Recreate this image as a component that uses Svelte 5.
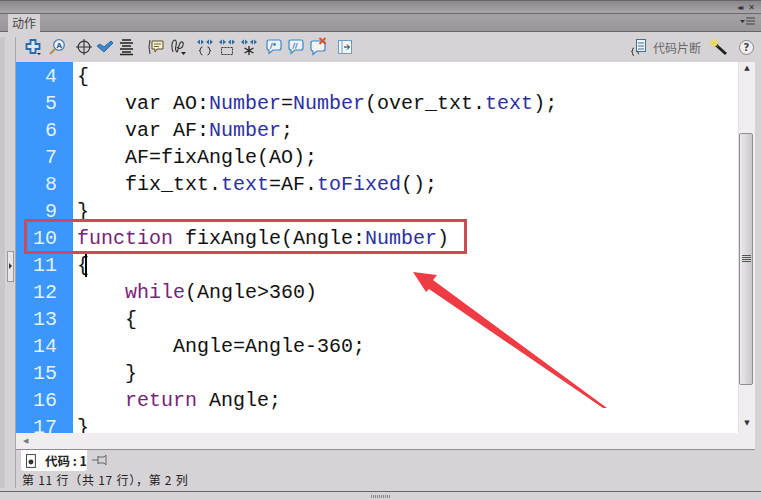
<script>
  const lines = [
    [4, [['p', '{']]],
    [5, [['p', '    var AO:'], ['t', 'Number'], ['p', '='], ['t', 'Number'], ['p', '(over_txt.'], ['t', 'text'], ['p', ');']]],
    [6, [['p', '    var AF:'], ['t', 'Number'], ['p', ';']]],
    [7, [['p', '    AF=fixAngle(AO);']]],
    [8, [['p', '    fix_txt.'], ['t', 'text'], ['p', '=AF.'], ['t', 'toFixed'], ['p', '();']]],
    [9, [['p', '}']]],
    [10, [['k', 'function'], ['p', ' fixAngle(Angle:'], ['t', 'Number'], ['p', ')']]],
    [11, [['p', '{']]],
    [12, [['p', '    '], ['k', 'while'], ['p', '(Angle>360)']]],
    [13, [['p', '    {']]],
    [14, [['p', '        Angle=Angle-360;']]],
    [15, [['p', '    }']]],
    [16, [['p', '    '], ['k', 'return'], ['p', ' Angle;']]],
    [17, [['p', '}']]]
  ];
</script>

{#snippet blueArrows()}
  <path d="M0 4l3-2.500v5zM7 4L4 1.500v5zM9 4l3-2.500v5zM16 4l-3-2.500v5z" fill="#2a6aa5"/>
{/snippet}

<div class="panel">
  <div class="titlebar">
    <span class="collapse">◂◂</span>
    <span class="close">✕</span>
  </div>
  <div class="tabbar">
    <div class="tab">动作</div>
    <svg class="menu" width="16" height="10" viewBox="0 0 16 10"><path d="M0 3h5l-2.500 3z" fill="#333"/><path d="M6 1h9M6 4h9M6 7h9" stroke="#444" fill="none"/></svg>
  </div>

  <div class="body">
    <div class="rail">
      <div class="grip"><span></span></div>
    </div>
    <div class="main">
      <div class="toolbar">
        <svg class="ic g-plus" width="16" height="18" viewBox="0 0 16 18"><path d="M5.500 2h5v4h4v5h-4v4h-5v-4h-4V6h4z" fill="#d8e8f6" stroke="#2a6aa5" stroke-width="1.800"/><path d="M12 15h4l-2 2z" fill="#222"/></svg>
        <svg class="ic g-mag" width="16" height="18" viewBox="0 0 16 18"><circle cx="10" cy="7" r="5.300" fill="#f2f2f4" stroke="#4a7fb0" stroke-width="1.300"/><path d="M6 11l-5 5" stroke="#b9924a" stroke-width="2.300"/><text x="7.500" y="10" class="mini">A</text></svg>
        <div class="group tight">
          <svg class="ic" width="16" height="18" viewBox="0 0 16 18"><circle cx="8" cy="9" r="5.800" fill="none" stroke="#333" stroke-width="1.200"/><path d="M8 1v16M0 9h16" stroke="#333" stroke-width="1.100"/></svg>
          <svg class="ic" width="16" height="18" viewBox="0 0 16 18"><path d="M0 8l3-2 4 3 7-6 2 2-9 9z" fill="#3d87c9" stroke="#2a6aa5"/></svg>
          <svg class="ic" width="16" height="18" viewBox="0 0 16 18"><path d="M4 2h9M2 5h13M4 8h9M2 11h13M4 14h9M2 16.500h13" stroke="#222" stroke-width="1.300"/></svg>
        </div>
        <div class="group g-com">
          <svg class="ic" width="16" height="18" viewBox="0 0 16 18"><path d="M2 2q-2 7 0 14" stroke="#333" fill="none"/><path d="M4 3h11v8H9l-2 3v-3H4z" fill="#f4efcf" stroke="#5a4a2a"/><path d="M6 6h7M6 8.500h5" stroke="#7a6a3a"/></svg>
          <svg class="ic" width="16" height="18" viewBox="0 0 16 18"><path d="M3 14C0 5 4 0 6 3c2 3-3 8 1 11 2-2 1-8 4-10 3-1 3 4 0 6-2 1-3 1-4-1" stroke="#333" fill="none" stroke-width="1.100"/><path d="M11 14h5l-2.500 3z" fill="#222"/></svg>
        </div>
        <div class="group g-braces">
          <svg class="ic" width="16" height="18" viewBox="0 0 16 18">{@render blueArrows()}<path d="M5.500 9q-2 0-2 2t-1.500 1.500q1.500 0 1.500 2t2 2.500M10.500 9q2 0 2 2t1.500 1.500q-1.500 0-1.500 2t-2 2.500" stroke="#333" fill="none"/></svg>
          <svg class="ic" width="16" height="18" viewBox="0 0 16 18">{@render blueArrows()}<rect x="2.500" y="9.500" width="11" height="7" fill="none" stroke="#333" stroke-dasharray="2 1"/></svg>
          <svg class="ic" width="16" height="18" viewBox="0 0 16 18">{@render blueArrows()}<path d="M8 8v9M3.500 10l9 5M12.500 10l-9 5" stroke="#222" stroke-width="1.300"/></svg>
        </div>
        <div class="group g-bubbles">
          <svg class="ic" width="16" height="18" viewBox="0 0 16 18"><path d="M3 2h10q2 0 2 2v6q0 2-2 2H7l-4 3.500V12q-2 0-2-2V4q0-2 2-2z" fill="#eaf2fa" stroke="#3d87c9" stroke-width="1.200"/><text x="4" y="9.500" class="mini">/*</text></svg>
          <svg class="ic" width="16" height="18" viewBox="0 0 16 18"><path d="M3 2h10q2 0 2 2v6q0 2-2 2H7l-4 3.500V12q-2 0-2-2V4q0-2 2-2z" fill="#eaf2fa" stroke="#3d87c9" stroke-width="1.200"/><text x="4.500" y="9.500" class="mini">//</text></svg>
          <svg class="ic" width="16" height="18" viewBox="0 0 16 18"><path d="M3 3h10q2 0 2 2v6q0 2-2 2H7l-4 3.500V13q-2 0-2-2V5q0-2 2-2z" fill="#f4f4f2" stroke="#3d87c9" stroke-width="1.200"/><path d="M9.500 0l6 6M15.500 0l-6 6" stroke="#d9542b" stroke-width="2"/></svg>
        </div>
        <svg class="ic g-last" width="16" height="18" viewBox="0 0 16 18"><rect x="1.500" y="2.500" width="13" height="13" fill="#f4f6f8" stroke="#6b9cc6"/><path d="M5 2v14" stroke="#6b9cc6"/><path d="M7 9h5M10 6.500l2.500 2.500-2.500 2.500" stroke="#222" fill="none"/></svg>

        <div class="right">
          <svg width="16" height="18" viewBox="0 0 16 18"><rect x="5.500" y="1.500" width="9" height="12" fill="#f2f4f7" stroke="#3e6e99"/><path d="M7 5h6M7 8h6M7 11h6" stroke="#3e6e99"/><path d="M3 10q-1.500 0-1.500 2t-1 1.500q1 0 1 2t1.500 2M6 13q1 0 1 1.500t1 1.500" stroke="#333" fill="none"/></svg>
          <span class="snip">代码片断</span>
          <svg class="wand" width="20" height="18" viewBox="0 0 20 18"><path d="M7 7l10 9" stroke="#222" stroke-width="3"/><circle cx="5" cy="5" r="3" fill="#f5e56b"/><path d="M5 0v10M0 5h10M1.500 1.500l7 7M8.500 1.500l-7 7" stroke="#e8d24a" stroke-width=".8"/></svg>
          <span class="help">?</span>
        </div>
      </div>

      <div class="editor">
        <div class="code">
          {#each lines as [n, parts]}
            <div class="row">
              <span class="num">{n}</span>
              <span class="src">{#each parts as [c, t]}<span class={c}>{t}</span>{/each}{#if n === 11}<i class="caret"></i>{/if}</span>
            </div>
          {/each}
          <div class="highlight"></div>
          <svg class="arrow" width="200" height="142" viewBox="410 268 200 142">
            <path d="M413 272L437 275 433 280 607 408 603 408 429 289 426 292z" fill="#ef3b44"/>
          </svg>
        </div>
        <div class="vscroll">
          <div class="arrowbtn">▲</div>
          <div class="track"><div class="thumb"><svg width="9" height="8" viewBox="0 0 9 8"><path d="M0 .5h9M0 2.500h9M0 4.500h9M0 6.500h9" stroke="#555"/></svg></div></div>
          <div class="arrowbtn down">▼</div>
        </div>
      </div>

      <div class="hscroll"><span>◀</span></div>
      <div class="tabsrow">
        <div class="filetab">
          <svg width="10" height="14" viewBox="0 0 10 14"><rect x=".5" y=".5" width="9" height="13" fill="#fff" stroke="#444"/><circle cx="5" cy="8" r="2.500" fill="#333"/></svg>
          <b>代码 : 1</b>
        </div>
        <svg class="pin" width="16" height="12" viewBox="0 0 16 12"><path d="M0 6h6M6 2v8M6 3h6l2-2v10l-2-2H6" stroke="#666" fill="none"/></svg>
      </div>
      <div class="status">第 11 行（共 17 行），第 2 列</div>
    </div>
  </div>
  <div class="footer"><span class="dots"></span></div>
</div>

<style>
  :global(body) { margin: 0; background: #d6d3d6; }
  .panel {
    width: 761px; height: 500px; overflow: hidden; display: flex; flex-direction: column;
    background: #d6d3d6; font-family: "Noto Sans CJK SC", sans-serif; color: #222;
  }
  .titlebar {
    height: 12px; flex: none; display: flex; justify-content: flex-end; align-items: center; gap: 7px; padding-right: 6px;
    background: linear-gradient(#8a878a, #aaa7aa); border-bottom: 1px solid #6a686a; font-size: 8px; color: #333;
    font-family: "DejaVu Sans", sans-serif; box-sizing: content-box; border-top: 1px solid #666;
  }
  .collapse { letter-spacing: -2px; }
  .tabbar {
    height: 17px; flex: none; display: flex; justify-content: space-between; align-items: flex-end;
    background: linear-gradient(#a5a2a5, #9a979a); border-bottom: 1px solid #666; padding-left: 8px; padding-right: 5px;
  }
  .tab {
    width: 32px; height: 18px; background: #d6d3d6; text-align: center; font-size: 12px; line-height: 18px; color: #444; margin-bottom: -1px;
  }
  .menu { margin-bottom: 4px; }
  .body { flex: 1; min-height: 0; display: flex; }
  .rail {
    width: 16px; flex: none; box-sizing: border-box; border-left: 5px solid #c9c6c9; border-right: 1px solid #a8a6a8; position: relative;
    display: flex; align-items: center; margin-top: 5px; margin-bottom: 3px;
  }
  .grip {
    width: 7px; height: 31px; margin-left: 2px; margin-top: 7px; background: #e8e6e8; border: 1px solid #999; box-sizing: border-box;
    display: flex; align-items: center; justify-content: center;
  }
  .grip span { width: 0; height: 0; border-left: 3px solid #333; border-top: 3px solid transparent; border-bottom: 3px solid transparent; }
  .main { flex: 1; min-width: 0; display: flex; flex-direction: column; margin-right: 6px; }
  .toolbar { height: 30px; flex: none; display: flex; align-items: center; padding-left: 9px; box-sizing: border-box; }
  .ic { flex: none; overflow: visible; }
  .group { display: flex; gap: 6px; flex: none; }
  .group.tight { gap: 5px; margin-left: 11px; }
  .g-mag { margin-left: 8px; }
  .g-com { margin-left: 14px; }
  .g-braces { margin-left: 11px; }
  .g-bubbles { margin-left: 9px; }
  .g-last { margin-left: 11px; }
  .mini { font: 700 7px "DejaVu Sans", sans-serif; fill: #2a5a8a; }
  .right { margin-left: auto; display: flex; align-items: center; gap: 5px; }
  .snip { font-size: 12px; color: #666; width: 48px; margin-left: 1px; white-space: nowrap; }
  .wand { margin-left: 3px; margin-right: 5px; }
  .help {
    width: 13px; height: 13px; border-radius: 50%; background: #f0eef0; border: 1px solid #888; color: #444;
    font: 700 10px/13px "DejaVu Sans", sans-serif; text-align: center; margin-right: 1px;
  }
  .editor { height: 371px; flex: none; display: flex; background: #fff; box-sizing: border-box; }
  .code { flex: 1; min-width: 0; position: relative; overflow: hidden; }
  .row { height: 27px; display: flex; line-height: 29px; font-family: "Liberation Mono", monospace; font-size: 20px; white-space: pre; }
  .num { width: 57px; flex: none; background: #3d96fb; color: #dff2ff; text-align: right; padding-right: 16px; box-sizing: border-box; overflow: hidden; }
  .src { padding-left: 4px; color: #111; position: relative; }
  .k { color: #7a1f7a; }
  .t { color: #2b2fa3; }
  .caret { display: inline-block; width: 2px; height: 23px; background: #000; vertical-align: -6px; margin-left: -4px; }
  .highlight { position: absolute; left: 8px; top: 157px; width: 443px; height: 35px; border: 3px solid #cf4a55; box-sizing: border-box; }
  .arrow { position: absolute; left: 394px; top: 206px; }
  .vscroll { width: 17px; flex: none; display: flex; flex-direction: column; background: #f0eef0; border-left: 1px solid #e4e2e4; box-sizing: border-box; }
  .arrowbtn { height: 12px; font-size: 7px; line-height: 12px; text-align: center; color: #333; flex: none; font-family: "DejaVu Sans", sans-serif; }
  .arrowbtn.down { margin-bottom: 4px; }
  .track { flex: 1; padding-top: 59px; padding-bottom: 32px; padding-right: 2px; min-height: 0; display: flex; }
  .thumb { flex: 1; background: linear-gradient(90deg, #eceaec, #c9c7c9); border: 1px solid #8f8d8f; border-radius: 2px; display: flex; align-items: center; justify-content: center; }
  .hscroll { height: 16px; flex: none; background: #efedf0; border-bottom: 1px solid #8f8d8f; font-size: 7px; line-height: 16px; padding-left: 7px; color: #777; box-sizing: content-box; font-family: "DejaVu Sans", sans-serif; }
  .tabsrow { height: 22px; flex: none; display: flex; align-items: flex-start; padding-left: 5px; }
  .filetab { height: 21px; width: 66px; flex: none; background: #fff; border-radius: 0 0 3px 3px; display: flex; align-items: center; gap: 9px; padding-left: 5px; box-sizing: border-box; font-size: 12.500px; }
  .filetab b { color: #222; white-space: pre; }
  .pin { margin: 4px 0 0 5px; }
  .status { height: 21px; flex: none; font-size: 12px; line-height: 16px; padding-left: 6px; color: #222; letter-spacing: .75px; white-space: nowrap; }
  .footer { height: 8px; flex: none; background: #d6d3d6; border-top: 1px solid #666; display: flex; justify-content: center; align-items: center; }
  .dots { width: 20px; height: 3px; background: repeating-linear-gradient(90deg, #888 0 1px, transparent 1px 2px); }
</style>
